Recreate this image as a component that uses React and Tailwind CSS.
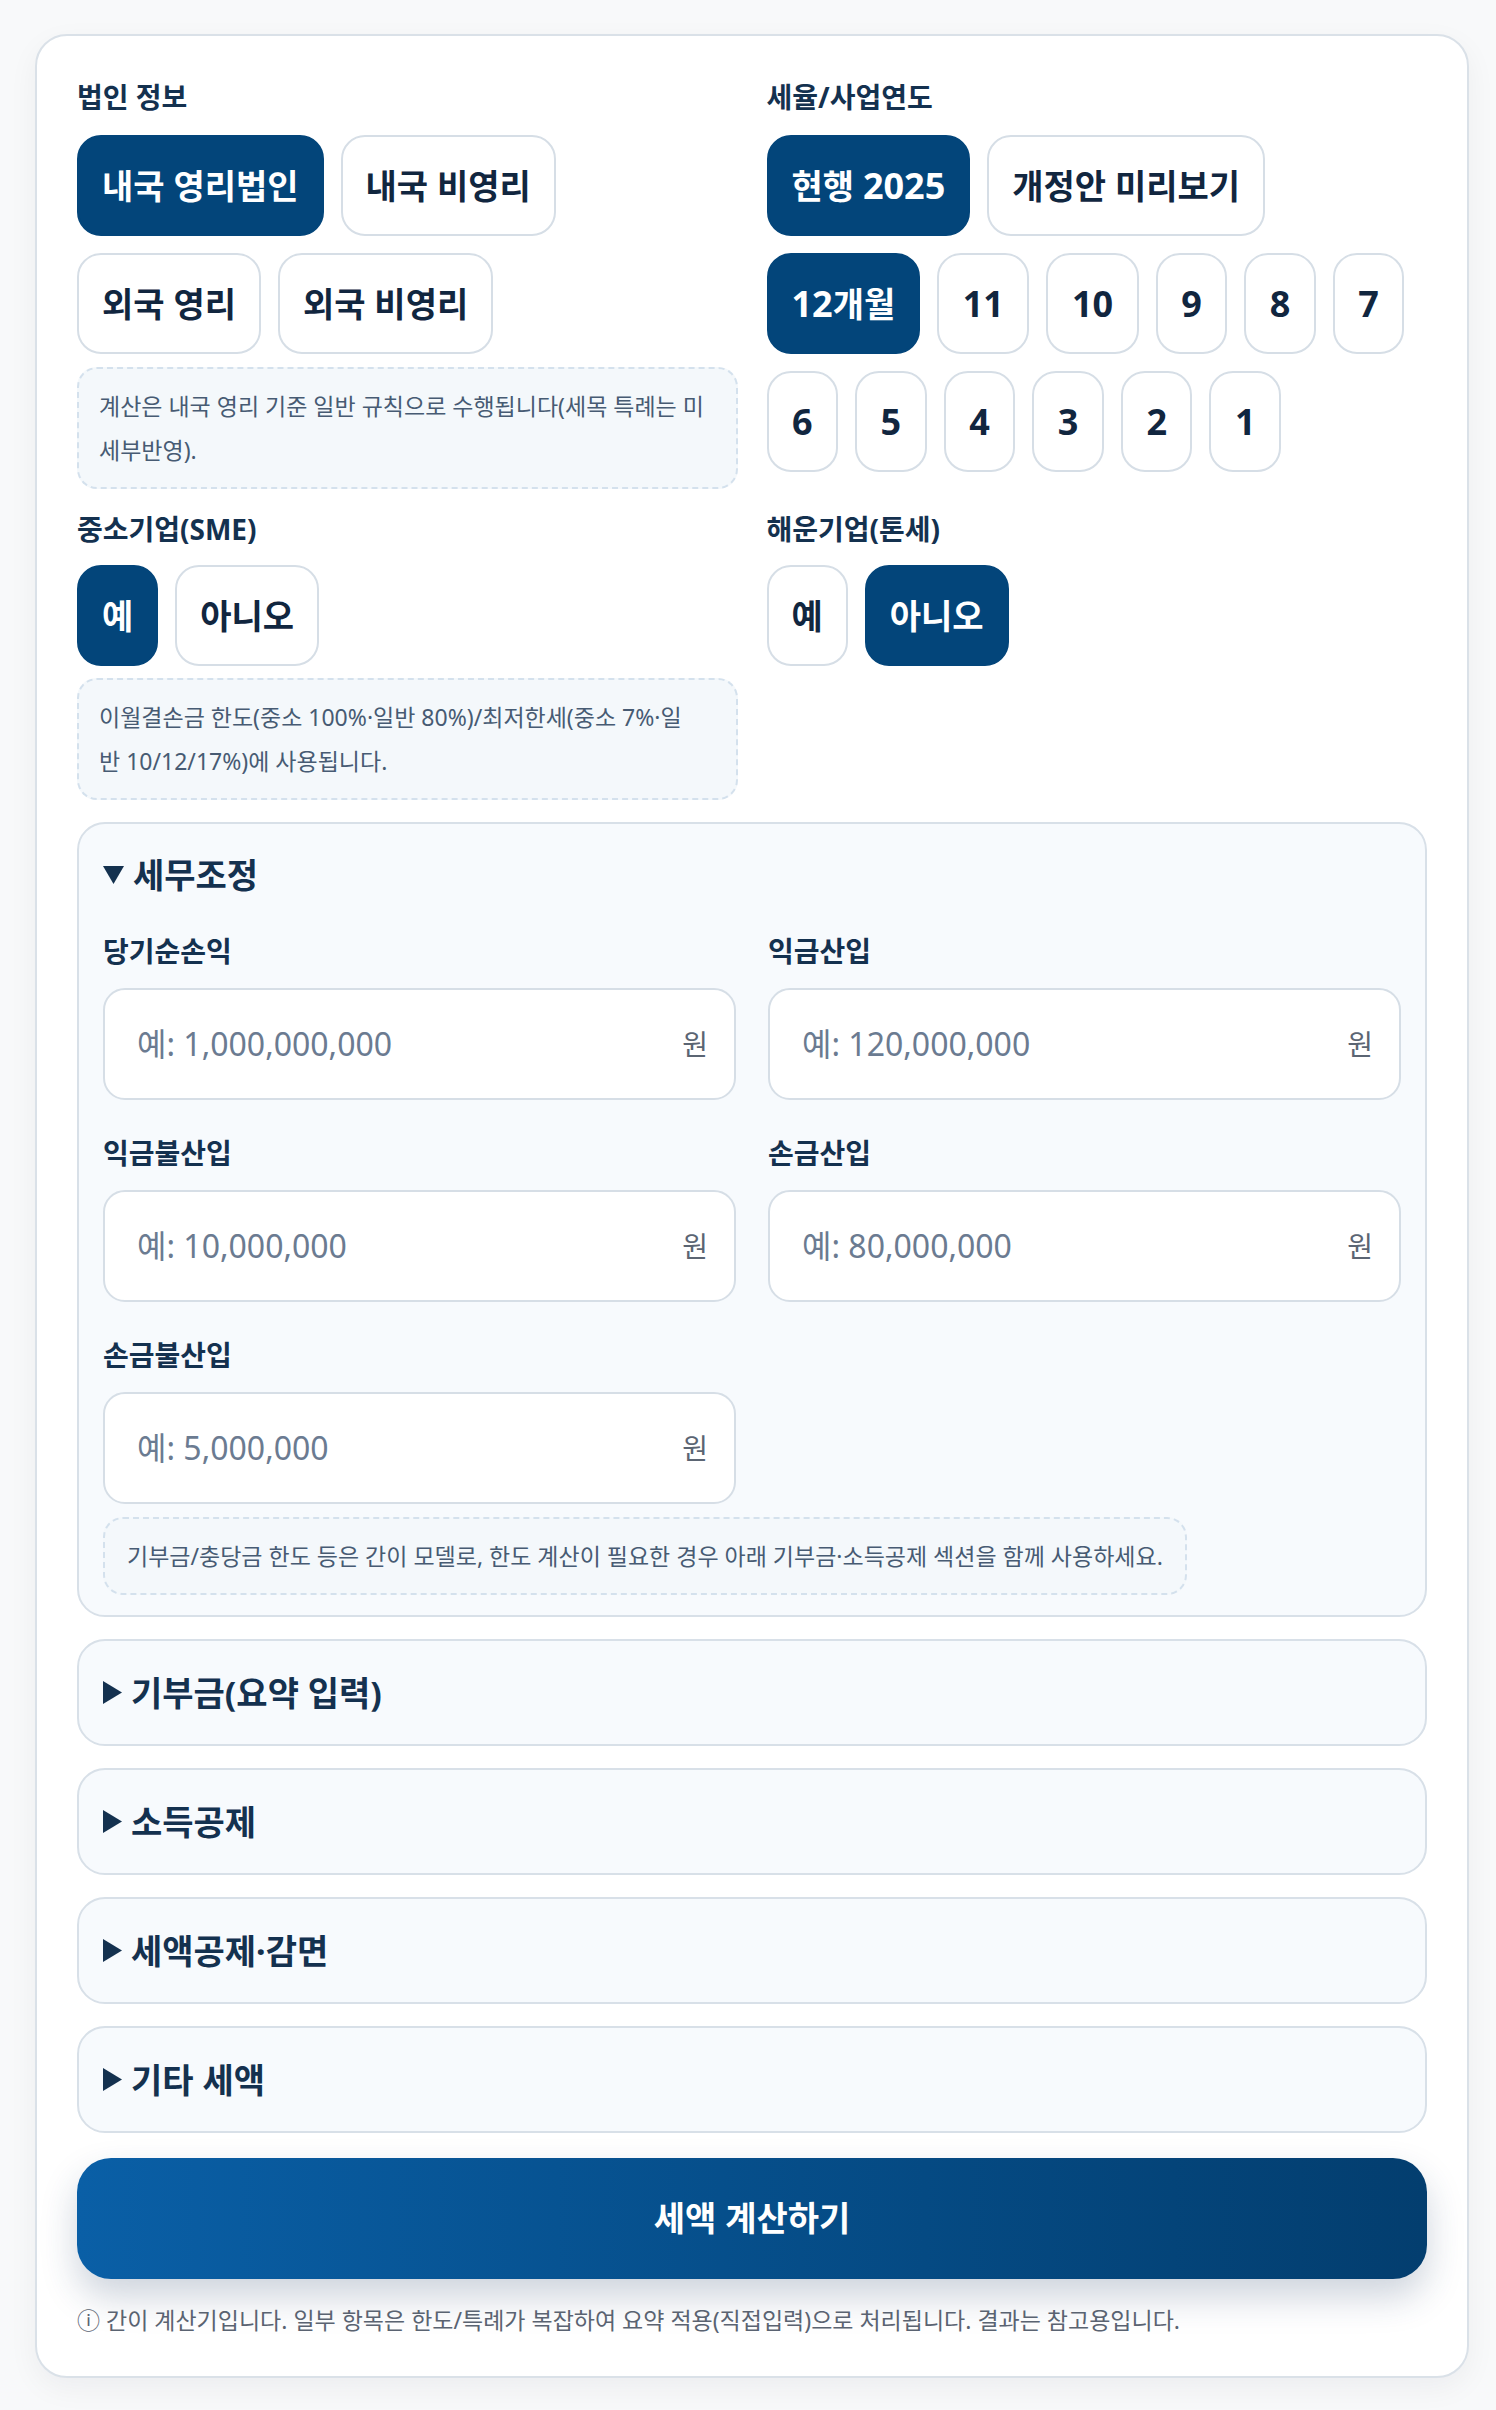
import React, { useState } from 'react';

const Triangle = ({ open }) =>
    open ? (
        <svg width="21" height="18" viewBox="0 0 21 18" className="shrink-0">
            <path d="M0 0 H21 L10.5 18 Z" fill="#14314f" />
        </svg>
    ) : (
        <svg width="19" height="23" viewBox="0 0 19 23" className="shrink-0">
            <path d="M0 0 L19 11.5 L0 23 Z" fill="#14314f" />
        </svg>
    );

// Hangul in the design runs a bit narrower than the digits, so digits get their own size
const Num = ({ children }) => <span className="text-[36px]">{children}</span>;

const Choice = ({ active, children, onClick, digit }) => (
    <button
        onClick={onClick}
        className={
            (active
                ? 'border-[#03457a] bg-[#03457a] text-white '
                : 'border-[#d6dee6] bg-white text-[#11263f] ') +
            (digit ? 'px-[23.5px] ' : 'px-[23px] ') +
            'h-[101px] rounded-[24px] border-2 text-[34px] font-bold leading-[54px]'
        }
    >
        {children}
    </button>
);

const Label = ({ children }) => (
    <div className="text-[28px] font-bold leading-[42px] text-[#14314f]">{children}</div>
);

const Note = ({ children, className = '' }) => (
    <div
        className={
            'rounded-[20px] border-2 border-dashed border-[#d4e1ed] bg-[#f4f8fb] pl-[20px] py-[15px] text-[23px] leading-[44px] text-[#475b73] ' +
            className
        }
    >
        {children}
    </div>
);

const MoneyField = ({ label, placeholder }) => (
    <div>
        <div className="mb-4">
            <Label>{label}</Label>
        </div>
        <div className="flex h-[112px] items-center rounded-[22px] border-2 border-[#d6dee6] bg-white pl-[32px] pr-[26px]">
            <input
                placeholder={placeholder}
                className="min-w-0 flex-1 bg-transparent text-[32px] text-[#11263f] outline-none placeholder:text-[#6b7b91]"
            />
            <span className="text-[28px] text-[#5b6573]">원</span>
        </div>
    </div>
);

const Collapsed = ({ title }) => (
    <div className="flex h-[107px] items-center gap-[9px] rounded-[28px] border-2 border-[#d8e0e8] bg-[#f7fafd] px-6">
        <Triangle open={false} />
        <span className="text-[34px] font-bold leading-[54px] text-[#14314f]">{title}</span>
    </div>
);

const App = () => {
    const [corp, setCorp] = useState('domestic');
    const [year, setYear] = useState('current');
    const [months, setMonths] = useState(12);
    const [sme, setSme] = useState(true);
    const [shipping, setShipping] = useState(false);

    const monthList = [11, 10, 9, 8, 7, 6, 5, 4, 3, 2, 1];

    return (
        <div className="min-h-screen bg-[#f8f9fa] pl-[35px] pr-[27px] pt-[34px] pb-[31px] font-['Noto_Sans','Noto_Sans_CJK_KR',sans-serif]">
            <div className="rounded-[32px] border-2 border-[#dae1e8] bg-white p-10 shadow-[0_10px_30px_rgba(15,23,42,0.05)]">
                <div className="grid grid-cols-2 gap-x-[29px] gap-y-[19px]">
                    {/* 법인 정보 */}
                    <div>
                        <div className="mb-[17px]">
                            <Label>법인 정보</Label>
                        </div>
                        <div className="flex flex-wrap gap-[17px]">
                            <Choice active={corp === 'domestic'} onClick={() => setCorp('domestic')}>내국 영리법인</Choice>
                            <Choice active={corp === 'domesticNp'} onClick={() => setCorp('domesticNp')}>내국 비영리</Choice>
                            <Choice active={corp === 'foreign'} onClick={() => setCorp('foreign')}>외국 영리</Choice>
                            <Choice active={corp === 'foreignNp'} onClick={() => setCorp('foreignNp')}>외국 비영리</Choice>
                        </div>
                        <Note className="mt-[13px] pr-[20px]">
                            계산은 내국 영리 기준 일반 규칙으로 수행됩니다(세목 특례는 미세부반영).
                        </Note>
                    </div>

                    {/* 세율/사업연도 */}
                    <div>
                        <div className="mb-[17px]">
                            <Label>세율/사업연도</Label>
                        </div>
                        <div className="flex flex-wrap gap-[17px]">
                            <Choice active={year === 'current'} onClick={() => setYear('current')}>
                                현행 <Num>2025</Num>
                            </Choice>
                            <Choice active={year === 'preview'} onClick={() => setYear('preview')}>개정안 미리보기</Choice>
                        </div>
                        <div className="mt-[17px] flex flex-wrap gap-[17px]">
                            <Choice active={months === 12} onClick={() => setMonths(12)}>
                                <Num>12</Num>개월
                            </Choice>
                            {monthList.map((m) => (
                                <Choice key={m} digit active={months === m} onClick={() => setMonths(m)}>
                                    <Num>{m}</Num>
                                </Choice>
                            ))}
                        </div>
                    </div>

                    {/* 중소기업 */}
                    <div>
                        <div className="mb-[15px]">
                            <Label>중소기업(SME)</Label>
                        </div>
                        <div className="flex gap-[17px]">
                            <Choice active={sme} onClick={() => setSme(true)}>예</Choice>
                            <Choice active={!sme} onClick={() => setSme(false)}>아니오</Choice>
                        </div>
                        <Note className="mt-[12px] pr-[36px]">
                            이월결손금 한도(중소 100%·일반 80%)/최저한세(중소 7%·일반 10/12/17%)에 사용됩니다.
                        </Note>
                    </div>

                    {/* 해운기업 */}
                    <div>
                        <div className="mb-[15px]">
                            <Label>해운기업(톤세)</Label>
                        </div>
                        <div className="flex gap-[17px]">
                            <Choice active={shipping} onClick={() => setShipping(true)}>예</Choice>
                            <Choice active={!shipping} onClick={() => setShipping(false)}>아니오</Choice>
                        </div>
                    </div>
                </div>

                <div className="mt-[22px] flex flex-col gap-[22px]">
                    {/* 세무조정 (open) */}
                    <div className="rounded-[28px] border-2 border-[#d8e0e8] bg-[#f7fafd] px-6 pt-6 pb-5">
                        <div className="flex items-center gap-[9px]">
                            <Triangle open />
                            <span className="text-[34px] font-bold leading-[54px] text-[#14314f]">세무조정</span>
                        </div>
                        <div className="mt-7 grid grid-cols-2 gap-x-8 gap-y-8">
                            <MoneyField label="당기순손익" placeholder="예: 1,000,000,000" />
                            <MoneyField label="익금산입" placeholder="예: 120,000,000" />
                            <MoneyField label="익금불산입" placeholder="예: 10,000,000" />
                            <MoneyField label="손금산입" placeholder="예: 80,000,000" />
                            <MoneyField label="손금불산입" placeholder="예: 5,000,000" />
                        </div>
                        <Note className="mt-[13px] w-fit pl-[22px] pr-[22px]">
                            기부금/충당금 한도 등은 간이 모델로, 한도 계산이 필요한 경우 아래 기부금·소득공제 섹션을 함께 사용하세요.
                        </Note>
                    </div>

                    <Collapsed title="기부금(요약 입력)" />
                    <Collapsed title="소득공제" />
                    <Collapsed title="세액공제·감면" />
                    <Collapsed title="기타 세액" />
                </div>

                <button className="mt-[25px] flex h-[121px] w-full items-center justify-center rounded-[34px] bg-linear-to-r from-[#0a5fa6] to-[#033e6f] text-[34px] font-bold text-white shadow-[0_18px_36px_rgba(30,60,100,0.22)]">
                    세액 계산하기
                </button>

                <p className="mt-[25px] text-[23px] leading-[32px] text-[#5a6371]">
                    ⓘ 간이 계산기입니다. 일부 항목은 한도/특례가 복잡하여 요약 적용(직접입력)으로 처리됩니다. 결과는 참고용입니다.
                </p>
            </div>
        </div>
    );
};

export default App;
